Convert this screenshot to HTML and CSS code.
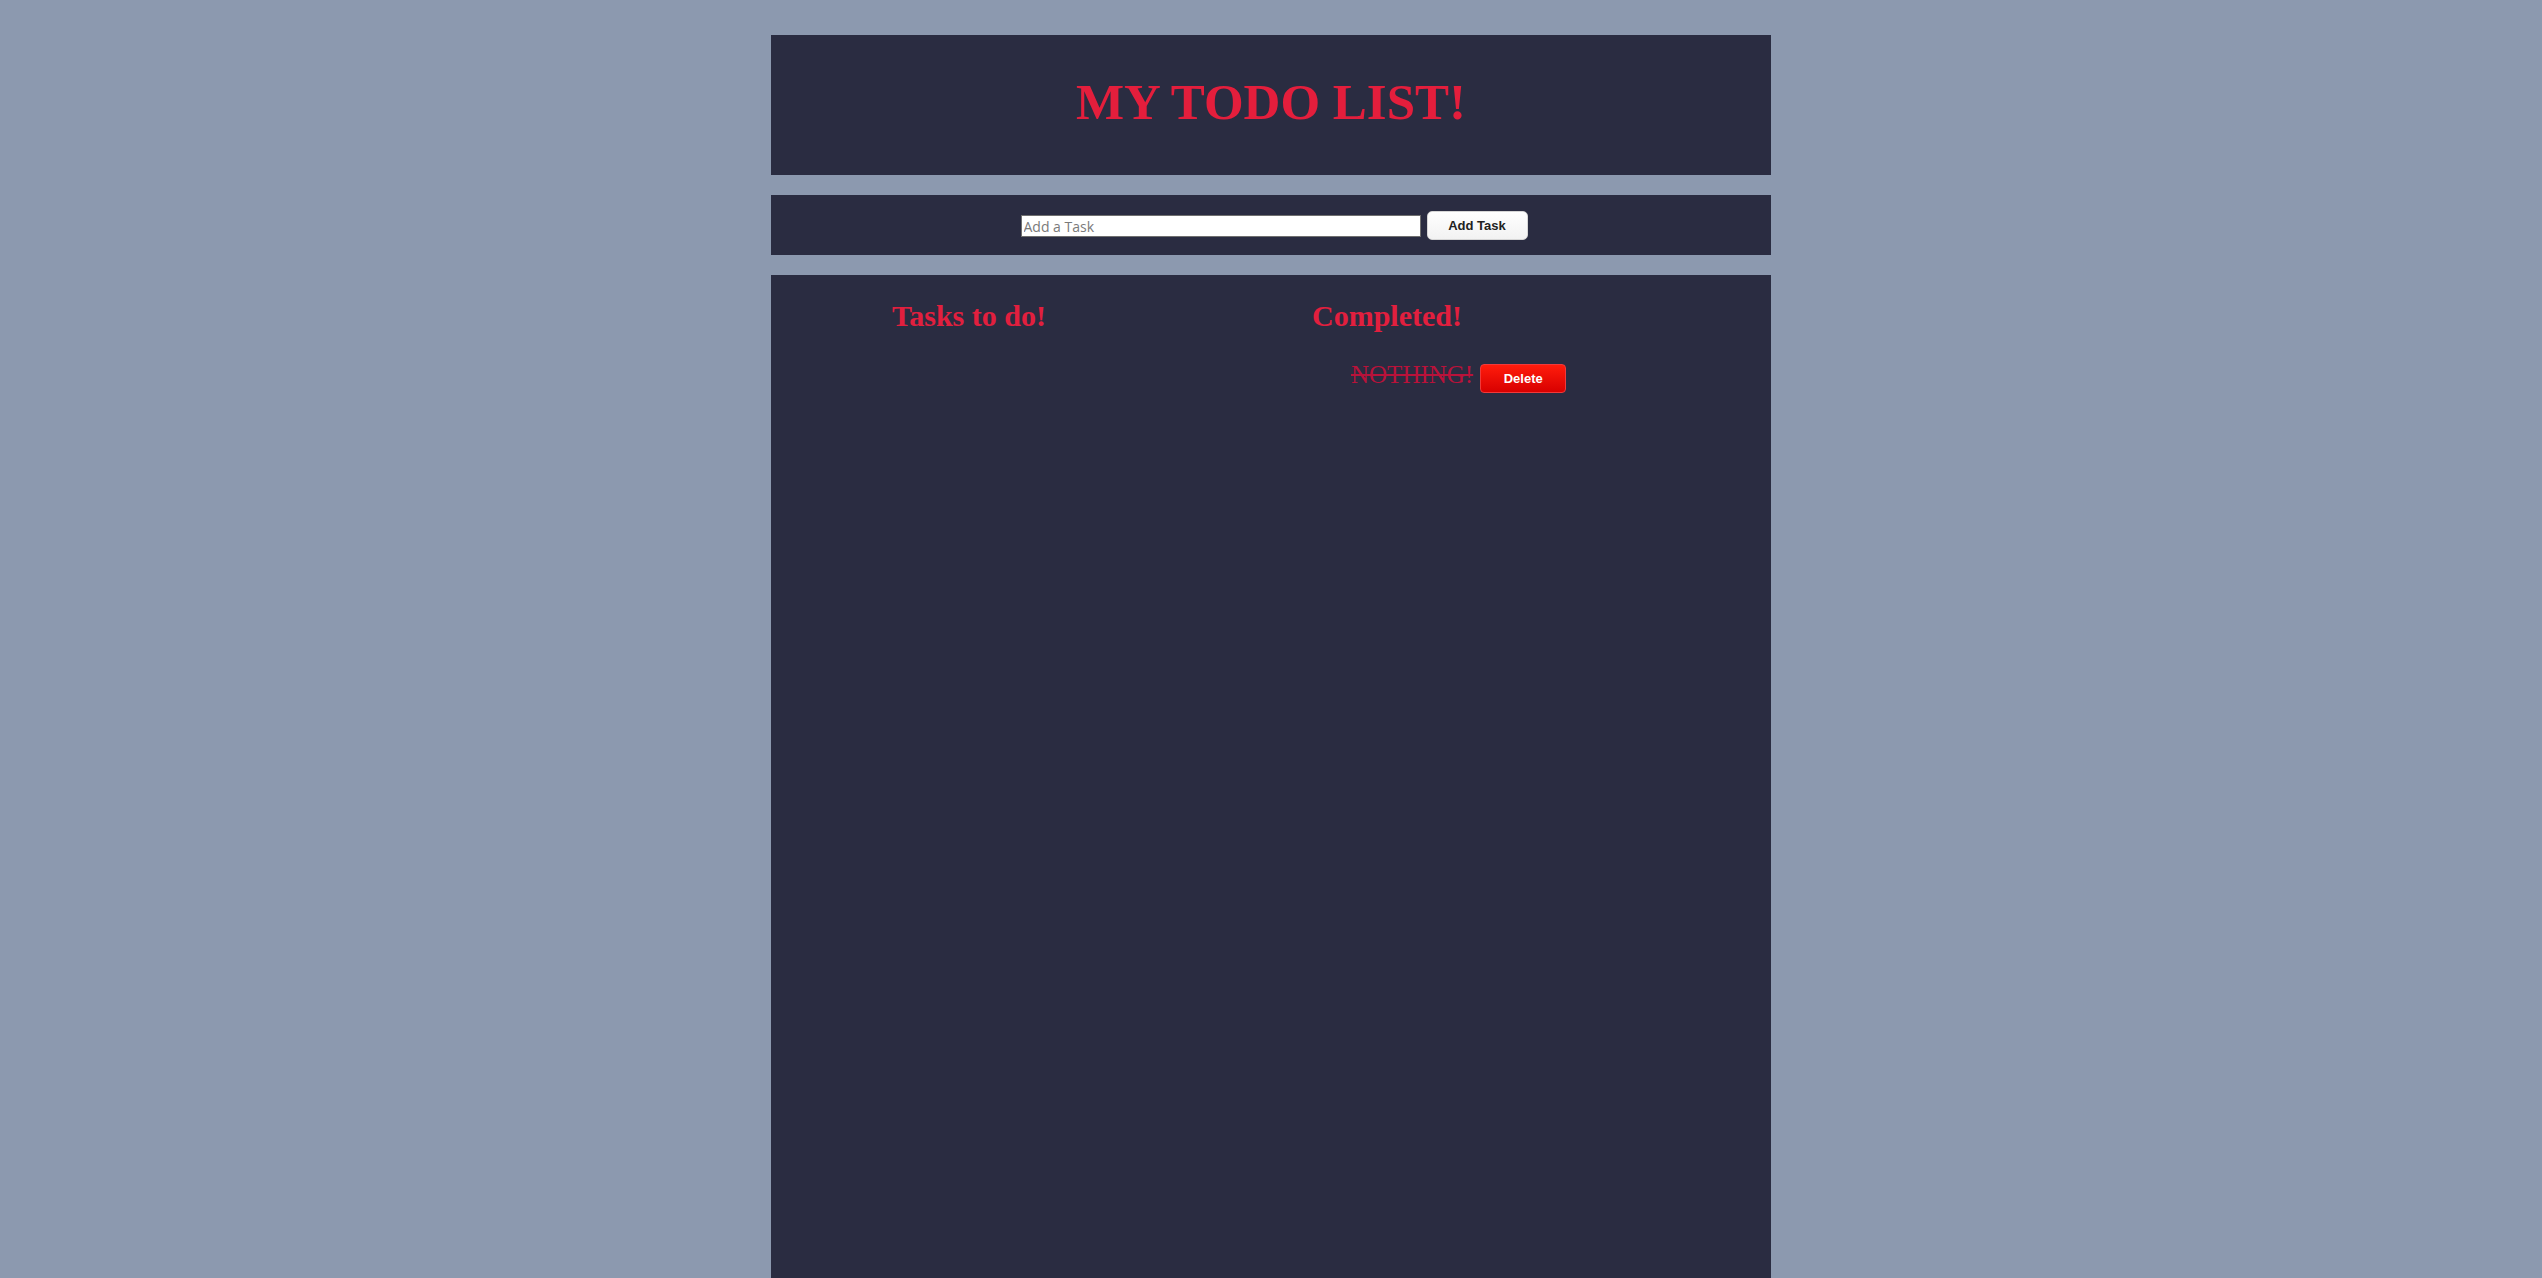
FILE: index.html
```html
<!DOCTYPE html>
<html lang="en">
<head>
<meta charset="utf-8">
<title>My Todo List</title>
<link rel="stylesheet" href="styles.css">
</head>
<body>
<div class="page">
  <header class="header">
    <h1 class="title">MY TODO LIST!</h1>
  </header>
  <section class="add-bar">
    <input class="task-input" type="text" placeholder="Add a Task">
    <button class="add-btn" type="button">Add Task</button>
  </section>
  <main class="lists">
    <div class="col col-todo">
      <h2 class="col-title">Tasks to do!</h2>
      <ul class="task-list"></ul>
    </div>
    <div class="col col-done">
      <h2 class="col-title">Completed!</h2>
      <ul class="task-list">
        <li class="task-item"><span class="task-text done">NOTHING!</span><button class="del-btn" type="button">Delete</button></li>
      </ul>
    </div>
  </main>
</div>
</body>
</html>
```
FILE: styles.css
```css
html, body {
  margin: 0;
  padding: 0;
}
body {
  background: #8c99af;
  font-family: "Liberation Serif", "Times New Roman", serif;
  min-height: 1278px;
  overflow: hidden;
}
.page {
  width: 1000px;
  margin: 35px auto 0;
  display: flex;
  flex-direction: column;
  gap: 20px;
}
.header {
  background: #2a2c41;
  height: 140px;
  box-sizing: border-box;
  padding-bottom: 6px;
  display: flex;
  align-items: center;
  justify-content: center;
}
.title {
  margin: 0;
  font-family: "Liberation Serif", "Times New Roman", serif;
  font-weight: bold;
  font-size: 51px;
  color: #e41e3c;
  line-height: 1.15;
}
.add-bar {
  background: #2a2c41;
  height: 60px;
  display: flex;
  align-items: center;
  justify-content: center;
  gap: 6px;
  padding-left: 6px;
  box-sizing: border-box;
}
.task-input {
  box-sizing: border-box;
  width: 400px;
  height: 22px;
  margin: 2px 0 0;
  padding: 1px 2px;
  border: 1px solid #6f6f6f;
  border-radius: 0;
  background: #fff;
  font-family: "Open Sans", "Liberation Sans", sans-serif;
  font-size: 14px;
  color: #222;
}
.task-input::placeholder {
  color: #7a7a7a;
}
.add-btn {
  box-sizing: border-box;
  width: 101px;
  height: 29px;
  padding: 0;
  border: 1px solid #d6d6d6;
  border-radius: 5px;
  background: linear-gradient(#ffffff, #f2f2f2);
  font-family: "Liberation Sans", Arial, sans-serif;
  font-weight: bold;
  font-size: 13px;
  color: #222;
}
.lists {
  background: #2a2c41;
  min-height: 1010px;
  display: grid;
  grid-template-columns: 500px 500px;
}
.col {
  padding-top: 24px;
}
.col-todo {
  padding-left: 121px;
}
.col-done {
  padding-left: 41px;
}
.col-title {
  margin: 0;
  font-family: "Liberation Serif", "Times New Roman", serif;
  font-weight: bold;
  font-size: 30px;
  color: #e21f3e;
  line-height: 1.15;
}
.task-list {
  list-style: none;
  margin: 27px 0 0;
  padding: 0 0 0 39px;
}
.task-item {
  display: flex;
  align-items: flex-start;
  gap: 7px;
}
.task-text {
  font-family: "Liberation Serif", "Times New Roman", serif;
  font-size: 25px;
  line-height: 1.15;
  color: #b9123a;
}
.task-text.done {
  text-decoration: line-through;
}
.del-btn {
  box-sizing: border-box;
  margin-top: 3px;
  width: 86px;
  height: 29px;
  padding: 0;
  border: 1px solid #f03a3a;
  border-radius: 4px;
  background: linear-gradient(#ff1c0c, #d80000);
  color: #fff;
  font-family: "Liberation Sans", Arial, sans-serif;
  font-weight: bold;
  font-size: 13px;
}
```
